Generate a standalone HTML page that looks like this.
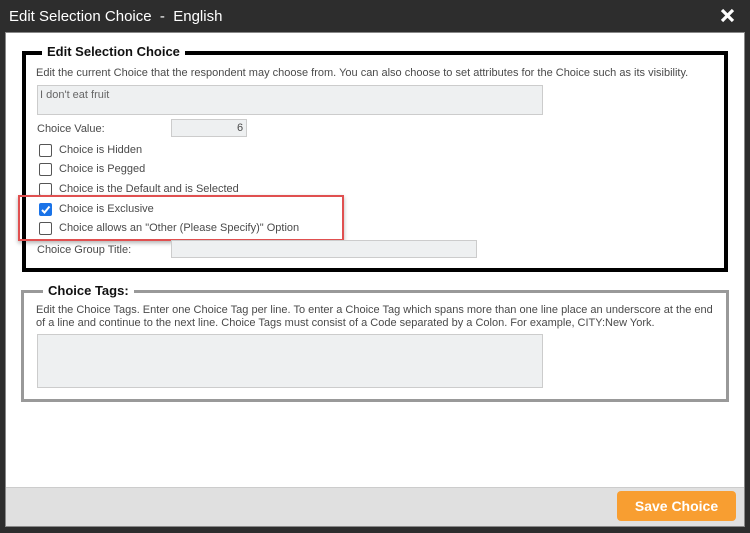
<!DOCTYPE html><html><head><style>
*{margin:0;padding:0;box-sizing:border-box}
body{width:750px;height:533px;background:#2d2d2d;font-family:"Liberation Sans",Arial,sans-serif;position:relative;overflow:hidden}
.a{position:absolute}
.t{font-size:11px;color:#4a4a4a}
.inp{position:absolute;background:#eef0f1;border:1px solid #ccc}
.cb{position:absolute;width:13px;height:13px;border:1px solid #555;border-radius:2px;background:#fff}
</style></head><body>
<div class="a" style="left:9px;top:8px;font-size:15px;color:#fff">Edit Selection Choice &nbsp;- &nbsp;English</div>
<svg class="a" style="left:720px;top:8px" width="15" height="15"><path d="M2 2L13 13M13 2L2 13" stroke="#fff" stroke-width="3.2"/></svg>
<div class="a" style="left:5px;top:32px;width:740px;height:495px;border:1px solid #888;background:#fff"></div>
<div class="a" style="left:6px;top:487px;width:738px;height:39px;background:#e0e0e0;border-top:1px solid #ccc"></div>
<div class="a" style="left:617px;top:491px;width:119px;height:30px;background:#f89e31;border-radius:4px;color:#fff;font-weight:bold;font-size:14px;text-align:center;line-height:30px">Save Choice</div>

<div class="a" style="left:22px;top:51px;width:706px;height:221px;border:4px solid #000"></div>
<div class="a" style="left:42px;top:44px;background:#fff;padding:0 5px;font-size:13px;font-weight:bold;color:#111">Edit Selection Choice</div>
<div class="a t" style="left:36px;top:67px">Edit the current Choice that the respondent may choose from. You can also choose to set attributes for the Choice such as its visibility.</div>
<div class="inp" style="left:37px;top:85px;width:506px;height:30px"></div>
<div class="a t" style="left:40px;top:89px;color:#666">I don't eat fruit</div>
<div class="a t" style="left:37px;top:123px">Choice Value:</div>
<div class="inp" style="left:171px;top:119px;width:76px;height:18px"></div>
<div class="a t" style="left:237px;top:122px">6</div>
<div class="cb" style="left:39px;top:144px"></div><div class="a t" style="left:59px;top:144px">Choice is Hidden</div>
<div class="cb" style="left:39px;top:163px"></div><div class="a t" style="left:59px;top:163px">Choice is Pegged</div>
<div class="cb" style="left:39px;top:183px"></div><div class="a t" style="left:59px;top:183px">Choice is the Default and is Selected</div>
<div class="cb" style="left:39px;top:203px;background:#1a73e8;border-color:#1a73e8"><svg width="11" height="11" style="position:absolute;left:0;top:0"><path d="M2 6L4.5 8.5L9.5 2.5" stroke="#fff" stroke-width="2" fill="none"/></svg></div><div class="a t" style="left:59px;top:203px">Choice is Exclusive</div>
<div class="cb" style="left:39px;top:222px"></div><div class="a t" style="left:59px;top:222px">Choice allows an "Other (Please Specify)" Option</div>
<div class="a" style="left:18px;top:195px;width:326px;height:46px;border:2px solid #e05050;box-shadow:0 2px 4px rgba(0,0,0,.3)"></div>
<div class="a t" style="left:37px;top:244px">Choice Group Title:</div>
<div class="inp" style="left:171px;top:240px;width:306px;height:18px"></div>

<div class="a" style="left:21px;top:290px;width:708px;height:112px;border:3px solid #999"></div>
<div class="a" style="left:43px;top:283px;background:#fff;padding:0 5px;font-size:13px;font-weight:bold;color:#111">Choice Tags:</div>
<div class="a t" style="left:36px;top:304px;line-height:13px;width:682px">Edit the Choice Tags. Enter one Choice Tag per line. To enter a Choice Tag which spans more than one line place an underscore at the end of a line and continue to the next line. Choice Tags must consist of a Code separated by a Colon. For example, CITY:New York.</div>
<div class="inp" style="left:37px;top:334px;width:506px;height:54px"></div>
</body></html>
